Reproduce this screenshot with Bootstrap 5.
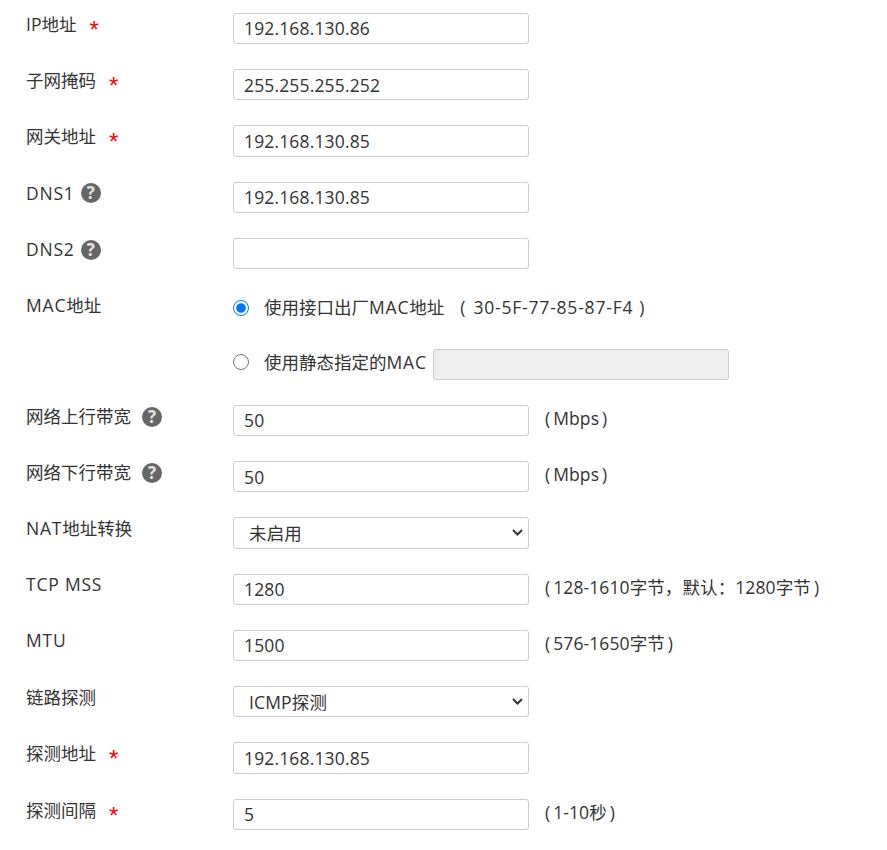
<!DOCTYPE html>
<html lang="zh-CN">
<head>
  <meta charset="UTF-8" />
  <title>接口设置</title>
  <link href="https://cdn.jsdelivr.net/npm/bootstrap@5.3.0/dist/css/bootstrap.min.css" rel="stylesheet" />
  <style>
    body {
      font-family: "Open Sans", "Noto Sans CJK SC", sans-serif;
      font-size: 17.5px;
      color: #333;
      background: #fff;
    }
    .cfg-form { padding: 12.75px 0 0 26px; }
    .cfg-row { display: flex; align-items: flex-start; margin-bottom: 25px; }
    .cfg-label { width: 207px; flex: none; line-height: 22px; display: flex; align-items: center; }
    .cfg-label.tight { line-height: 20px; }
    .cfg-latin { letter-spacing: .8px; }
    .cfg-req { color: #f00; font-family: "Liberation Sans", sans-serif; font-size: 24px; line-height: 22px; margin-left: 13px; position: relative; top: 6px; }
    .cfg-help { width: 20px; height: 20px; border-radius: 50%; background: #666; color: #e4e4e4; font-size: 17px; font-weight: 700; line-height: 20px; text-align: center; margin: 1.5px 0 0 6px; }
    .cfg-help.far { margin-left: 11px; }
    .cfg-form .form-control, .cfg-form .form-select {
      width: 296px;
      height: 31.25px;
      min-height: 0;
      flex: none;
      padding: 0 10px;
      font-size: 17.5px;
      line-height: 29px;
      letter-spacing: .15px;
      color: #333;
      border: 1px solid #ccc;
      border-radius: 3px;
    }
    .cfg-form .form-select {
      padding: 1px 24px 0 15px;
      background-image: url("data:image/svg+xml,%3csvg xmlns='http://www.w3.org/2000/svg' viewBox='0 0 11 7'%3e%3cpath fill='none' stroke='%23333' stroke-width='2' d='M1 1l4.5 4.5L10 1'/%3e%3c/svg%3e");
      background-position: right 5px center;
      background-size: 11px 7px;
    }
    .cfg-form .form-control:disabled { background: #eee; }
    .cfg-hint { margin-left: 16px; line-height: 27px; }
    .cfg-hint-text { margin: 0 3px; letter-spacing: .1px; }
    .cfg-mac { margin-left: 16px; }
    .cfg-mac-text { margin: 0 6px 0 8px; }
    .cfg-radio { height: 29.5px; }
    .cfg-radio-static { height: 31.25px; }
    .cfg-radio-line { display: flex; align-items: flex-start; line-height: 27px; }
    .cfg-radio-line .form-check-input { appearance: auto; -webkit-appearance: auto; background: none; border: 0; width: 16px; height: 16px; margin: 5.5px 15px 0 0; flex: none; }
    .cfg-radio-line .form-control { margin-left: 6px; }
  </style>
</head>
<body>
  <form class="cfg-form">
    <div class="cfg-row">
      <label class="cfg-label">IP地址<span class="cfg-req">*</span></label>
      <input type="text" class="form-control" value="192.168.130.86" />
    </div>
    <div class="cfg-row">
      <label class="cfg-label">子网掩码<span class="cfg-req">*</span></label>
      <input type="text" class="form-control" value="255.255.255.252" />
    </div>
    <div class="cfg-row">
      <label class="cfg-label">网关地址<span class="cfg-req">*</span></label>
      <input type="text" class="form-control" value="192.168.130.85" />
    </div>
    <div class="cfg-row">
      <label class="cfg-label"><span class="cfg-latin">DNS1</span><span class="cfg-help">?</span></label>
      <input type="text" class="form-control" value="192.168.130.85" />
    </div>
    <div class="cfg-row">
      <label class="cfg-label"><span class="cfg-latin">DNS2</span><span class="cfg-help">?</span></label>
      <input type="text" class="form-control" />
    </div>
    <div class="cfg-row cfg-radio">
      <label class="cfg-label"><span class="cfg-latin">MAC</span>地址</label>
      <div class="cfg-radio-line">
        <input class="form-check-input" type="radio" name="mac" checked />
        <span>使用接口出厂<span class="cfg-latin">MAC</span>地址<span class="cfg-mac">(<span class="cfg-mac-text cfg-latin">30-5F-77-85-87-F4</span>)</span></span>
      </div>
    </div>
    <div class="cfg-row cfg-radio-static">
      <label class="cfg-label"></label>
      <div class="cfg-radio-line">
        <input class="form-check-input" type="radio" name="mac" />
        <span>使用静态指定的<span class="cfg-latin">MAC</span></span>
        <input type="text" class="form-control" disabled />
      </div>
    </div>
    <div class="cfg-row">
      <label class="cfg-label">网络上行带宽<span class="cfg-help far">?</span></label>
      <input type="text" class="form-control" value="50" />
      <span class="cfg-hint">(<span class="cfg-hint-text">Mbps</span>)</span>
    </div>
    <div class="cfg-row">
      <label class="cfg-label">网络下行带宽<span class="cfg-help far">?</span></label>
      <input type="text" class="form-control" value="50" />
      <span class="cfg-hint">(<span class="cfg-hint-text">Mbps</span>)</span>
    </div>
    <div class="cfg-row">
      <label class="cfg-label"><span class="cfg-latin">NAT</span>地址转换</label>
      <select class="form-select"><option>未启用</option></select>
    </div>
    <div class="cfg-row">
      <label class="cfg-label tight"><span class="cfg-latin">TCP MSS</span></label>
      <input type="text" class="form-control" value="1280" />
      <span class="cfg-hint">(<span class="cfg-hint-text">128-1610字节，默认：1280字节</span>)</span>
    </div>
    <div class="cfg-row">
      <label class="cfg-label tight"><span class="cfg-latin">MTU</span></label>
      <input type="text" class="form-control" value="1500" />
      <span class="cfg-hint">(<span class="cfg-hint-text">576-1650字节</span>)</span>
    </div>
    <div class="cfg-row">
      <label class="cfg-label">链路探测</label>
      <select class="form-select"><option>ICMP探测</option></select>
    </div>
    <div class="cfg-row">
      <label class="cfg-label">探测地址<span class="cfg-req">*</span></label>
      <input type="text" class="form-control" value="192.168.130.85" />
    </div>
    <div class="cfg-row">
      <label class="cfg-label">探测间隔<span class="cfg-req">*</span></label>
      <input type="text" class="form-control" value="5" />
      <span class="cfg-hint">(<span class="cfg-hint-text">1-10秒</span>)</span>
    </div>
  </form>
  <script src="https://cdn.jsdelivr.net/npm/bootstrap@5.3.0/dist/js/bootstrap.bundle.min.js"></script>
</body>
</html>
